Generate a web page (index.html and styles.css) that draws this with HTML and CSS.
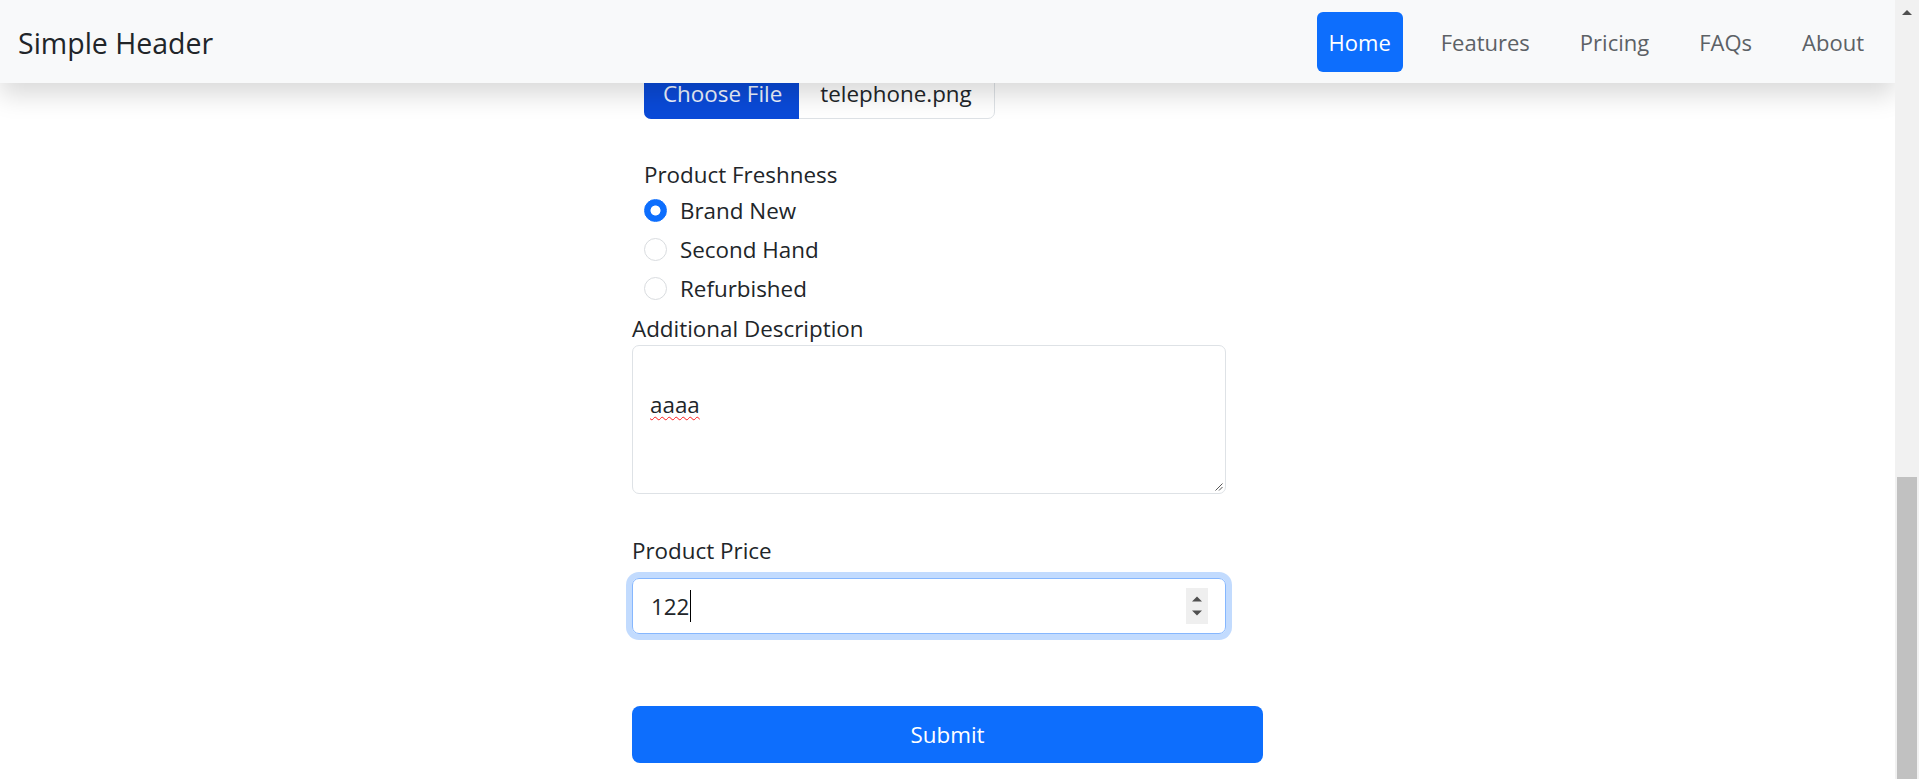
FILE: index.html
```html
<!DOCTYPE html>
<html lang="en">
<head>
<meta charset="utf-8">
<title>Simple Header</title>
<link rel="stylesheet" href="styles.css">
</head>
<body>
<div class="window">
  <div class="viewport">
    <header class="topbar">
      <a class="brand" href="#">Simple Header</a>
      <nav class="nav">
        <a class="nav-link active" href="#">Home</a>
        <a class="nav-link" href="#">Features</a>
        <a class="nav-link" href="#">Pricing</a>
        <a class="nav-link" href="#">FAQs</a>
        <a class="nav-link" href="#">About</a>
      </nav>
    </header>
    <main class="content">
      <form class="form">
        <div class="file-input">
          <span class="file-btn">Choose File</span>
          <span class="file-name">telephone.png</span>
        </div>
        <div class="group">
          <div class="group-label">Product Freshness</div>
          <label class="radio"><span class="radio-dot checked"></span>Brand New</label>
          <label class="radio"><span class="radio-dot"></span>Second Hand</label>
          <label class="radio"><span class="radio-dot"></span>Refurbished</label>
        </div>
        <div class="field-label desc-label">Additional Description</div>
        <div class="textarea">
          <br><span class="misspelled">aaaa</span>
          <svg class="resize" width="8" height="8" viewBox="0 0 8 8"><path d="M7.5 0.5 L0.5 7.5 M7.5 4 L4 7.5" stroke="#555" stroke-width="1" fill="none"/></svg>
        </div>
        <div class="field-label price-label">Product Price</div>
        <div class="number-input">
          <span class="num-value">122</span><span class="caret"></span>
          <span class="spacer"></span>
          <span class="spinner">
            <svg width="22" height="36" viewBox="0 0 22 36"><path d="M6 13.5 L11 8.5 L16 13.5 Z" fill="#505050"/><path d="M6 22.5 L16 22.5 L11 27.5 Z" fill="#505050"/></svg>
          </span>
        </div>
        <button class="submit" type="button">Submit</button>
      </form>
    </main>
  </div>
  <div class="scrollbar">
    <div class="scroll-arrow">
      <svg width="24" height="22" viewBox="0 0 24 22"><path d="M7 15 L12 10 L17 15 Z" fill="#505050"/></svg>
    </div>
    <div class="scroll-track"><div class="scroll-thumb"></div></div>
  </div>
</div>
</body>
</html>
```

FILE: styles.css
```css
html, body {
  margin: 0;
  padding: 0;
  height: 100%;
  overflow: hidden;
  background: #fff;
}

body {
  font-family: "Open Sans", "Noto Sans", "DejaVu Sans", sans-serif;
  color: #212529;
}

.window {
  display: flex;
  width: 1919px;
  height: 779px;
}

.viewport {
  flex: 1;
  min-width: 0;
  display: flex;
  flex-direction: column;
  overflow: hidden;
  background: #fff;
}

.topbar {
  flex: none;
  height: 83px;
  box-sizing: border-box;
  display: flex;
  align-items: center;
  justify-content: space-between;
  padding: 0 19px 0 17px;
  background: #f8f9fa;
  box-shadow: 0 12px 24px rgba(0, 0, 0, 0.15);
  position: relative;
  z-index: 2;
}

.brand {
  font-size: 28.5px;
  color: #212529;
  text-decoration: none;
  padding-top: 2px;
  padding-left: 1px;
}

.nav {
  display: flex;
  gap: 26px;
}

.nav-link {
  height: 60px;
  display: flex;
  align-items: center;
  padding: 0 12px;
  border-radius: 6px;
  font-size: 22px;
  color: #5c6166;
  text-decoration: none;
}

.nav-link.active {
  background: #0d6efd;
  color: #fff;
}

.content {
  margin-top: -16px;
  display: flex;
  justify-content: center;
}

.form {
  width: 631px;
  display: flex;
  flex-direction: column;
  font-size: 22.4px;
  line-height: 33px;
}

.file-input {
  margin-left: 12px;
  width: 351px;
  height: 52px;
  box-sizing: border-box;
  display: flex;
  align-items: stretch;
  border: 1px solid #dee2e6;
  border-radius: 7px;
}

.file-btn {
  display: flex;
  align-items: center;
  margin: -1px 0 -1px -1px;
  padding: 0 17px 0 19px;
  background: #0a4ad8;
  color: #eef3ff;
  border-radius: 7px 0 0 7px;
}

.file-name {
  display: flex;
  align-items: center;
  padding-left: 21px;
}

.group {
  margin-top: 39px;
  padding-left: 12px;
  display: flex;
  flex-direction: column;
}

.group-label {
  height: 33px;
}

.radio {
  height: 39px;
  display: flex;
  align-items: center;
  gap: 13px;
}

.radio-dot {
  flex: none;
  width: 23px;
  height: 23px;
  box-sizing: border-box;
  border-radius: 50%;
  border: 1px solid #d9dcdf;
  background: #fff;
}

.radio-dot.checked {
  border-color: #0d6efd;
  background: radial-gradient(circle, #fff 0 4.6px, #0d6efd 5.4px);
}

.field-label {
  height: 33px;
}

.desc-label {
  margin-top: 4px;
}

.textarea {
  position: relative;
  width: 594px;
  height: 149px;
  box-sizing: border-box;
  border: 1px solid #dee2e6;
  border-radius: 7px;
  padding: 9px 17px;
}

.misspelled {
  text-decoration: underline wavy #ff1a1a;
  text-decoration-thickness: 1.3px;
  text-underline-offset: 3px;
}

.resize {
  position: absolute;
  right: 2px;
  bottom: 2px;
}

.price-label {
  margin-top: 40px;
}

.number-input {
  margin-top: 11px;
  width: 594px;
  height: 56px;
  box-sizing: border-box;
  display: flex;
  align-items: center;
  padding: 0 17px 0 18px;
  border: 1.5px solid #86b7fe;
  border-radius: 7px;
  box-shadow: 0 0 0 6px rgba(13, 110, 253, 0.25);
}

.caret {
  width: 1px;
  height: 32px;
  background: #000;
  margin-left: 1px;
}

.spacer {
  flex: 1;
}

.spinner {
  width: 22px;
  height: 36px;
  background: #efefef;
  display: block;
}

.spinner svg {
  display: block;
}

.submit {
  margin-top: 72px;
  height: 57px;
  width: 100%;
  border: none;
  border-radius: 8px;
  background: #0d6efd;
  color: #fff;
  font-family: inherit;
  font-size: 22.4px;
  padding: 0;
}

.scrollbar {
  flex: none;
  width: 24px;
  height: 779px;
  background: #f1f1f1;
  display: flex;
  flex-direction: column;
}

.scroll-arrow {
  height: 22px;
  flex: none;
}

.scroll-arrow svg {
  display: block;
}

.scroll-track {
  flex: 1;
  display: flex;
  flex-direction: column;
  justify-content: flex-end;
}

.scroll-thumb {
  height: 302px;
  margin: 0 2px;
  background: #c1c1c1;
}
```
